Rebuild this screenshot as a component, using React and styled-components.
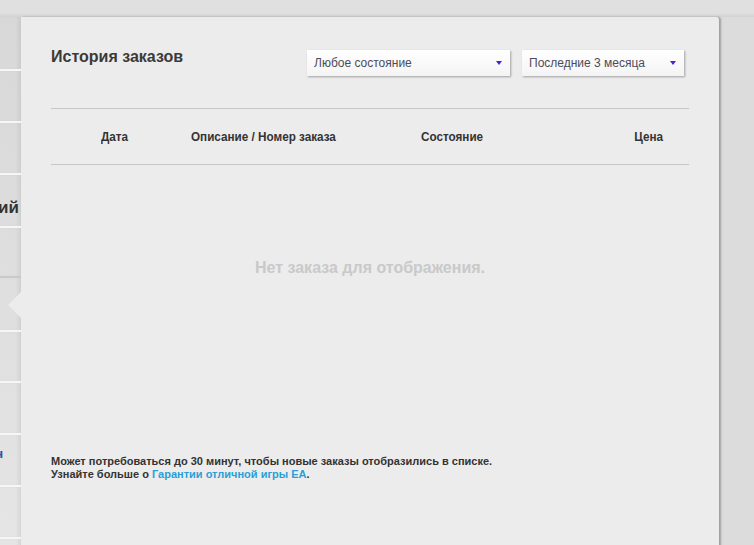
import React from "react";
import styled, { createGlobalStyle } from "styled-components";

const Global = createGlobalStyle`
  html, body { margin: 0; padding: 0; }
  body {
    background: #dcdcdc;
    font-family: "Liberation Sans", Arial, sans-serif;
  }
`;

const Page = styled.div`
  width: 754px;
  height: 545px;
  overflow: hidden;
  display: flex;
  flex-direction: column;
  background: #dcdcdc;
`;

const TopStrip = styled.div`
  height: 17px;
  flex: none;
  background: linear-gradient(#e0e0e0 0, #e0e0e0 13px, #d2d2d2 17px);
`;

const Body = styled.div`
  flex: 1;
  display: flex;
  align-items: stretch;
`;

const Sidebar = styled.nav`
  width: 21px;
  flex: none;
  display: flex;
  flex-direction: column;
  background: linear-gradient(#d8d8d8, #e6e6e6);
`;

const SideItem = styled.div`
  position: relative;
  height: ${(p) => p.$h}px;
  flex: none;
  border-bottom: 2px solid ${(p) => (p.$dark ? "#c9c9c9" : "#f6f6f6")};
  box-shadow: inset -4px 0 4px -2px rgba(0, 0, 0, 0.08);
  overflow: hidden;
  display: flex;
  justify-content: flex-end;
  align-items: ${(p) => p.$align || "center"};
`;

const SideLabel = styled.span`
  white-space: nowrap;
  font-weight: bold;
  font-size: ${(p) => p.$size}px;
  color: ${(p) => p.$color};
  margin-right: ${(p) => p.$offset}px;
  margin-top: ${(p) => p.$top || 0}px;
  margin-bottom: ${(p) => p.$bottom || 0}px;
`;

const ActiveArrow = styled.div`
  position: absolute;
  right: 0;
  top: 14px;
  width: 0;
  height: 0;
  border-top: 13px solid transparent;
  border-bottom: 13px solid transparent;
  border-right: 13px solid #ececec;
`;

const Panel = styled.main`
  width: 638px;
  flex: none;
  background: #ececec;
  border-top-right-radius: 3px;
  box-shadow: 2px 0 2px rgba(0, 0, 0, 0.28);
  padding: 31px 30px 0 30px;
  display: flex;
  flex-direction: column;
`;

const HeaderRow = styled.div`
  display: flex;
  justify-content: space-between;
  align-items: flex-start;
  height: 60px;
  border-bottom: 1px solid #c6c6c6;
`;

const Title = styled.h1`
  margin: 0;
  font-size: 16px;
  line-height: 18px;
  font-weight: bold;
  color: #3a3a3a;
`;

const Filters = styled.div`
  display: flex;
  gap: 12px;
  margin-top: 2px;
  margin-right: 5px;
`;

const Select = styled.div`
  width: ${(p) => p.$w}px;
  height: 26px;
  box-sizing: border-box;
  padding: 0 8px 0 7px;
  display: flex;
  align-items: center;
  justify-content: space-between;
  background: linear-gradient(#ffffff, #f4f4f4);
  box-shadow: 1px 1px 2px rgba(0, 0, 0, 0.32);
  font-size: 12px;
  color: #4d4b58;
`;

const Caret = styled.span`
  width: 0;
  height: 0;
  border-left: 3.5px solid transparent;
  border-right: 3.5px solid transparent;
  border-top: 4px solid #4f1fd0;
  margin-top: -1px;
`;

const TableHead = styled.div`
  display: grid;
  grid-template-columns: 90px 230px 1fr auto;
  align-items: center;
  height: 55px;
  padding: 0 26px 0 50px;
  border-bottom: 1px solid #c6c6c6;
`;

const HeadCell = styled.div`
  font-family: "Liberation Sans Narrow", "Liberation Sans", Arial, sans-serif;
  font-weight: bold;
  font-size: 13px;
  color: #333;
  white-space: nowrap;
  transform: scaleX(0.9);
  transform-origin: ${(p) => (p.$end ? "right" : "left")} center;
`;

const Empty = styled.div`
  height: 206px;
  display: flex;
  align-items: center;
  justify-content: center;
  font-size: 16px;
  font-weight: bold;
  color: #c9c9c9;
`;

const Note = styled.p`
  margin: 84px 0 0 0;
  font-size: 11px;
  line-height: 13px;
  font-weight: bold;
  color: #333;
`;

const Link = styled.a`
  color: #2a9fd8;
  text-decoration: none;
`;

const Rest = styled.div`
  flex: 1;
`;

export default function App() {
  return (
    <Page>
      <Global />
      <TopStrip />
      <Body>
        <Sidebar>
          <SideItem $h={52} />
          <SideItem $h={50} />
          <SideItem $h={50} />
          <SideItem $h={51} $align="flex-end">
            <SideLabel $size={17} $color="#333" $offset={2} $bottom={8}>
              уведомлений
            </SideLabel>
          </SideItem>
          <SideItem $h={48} $dark />
          <SideItem $h={52}>
            <ActiveArrow />
          </SideItem>
          <SideItem $h={49} />
          <SideItem $h={50} />
          <SideItem $h={50} $align="flex-start">
            <SideLabel $size={13} $color="#2d4fa0" $offset={18} $top={11}>
              Подписки н
            </SideLabel>
          </SideItem>
          <SideItem $h={50} />
          <SideItem $h={50} />
        </Sidebar>
        <Panel>
          <HeaderRow>
            <Title>История заказов</Title>
            <Filters>
              <Select $w={203}>
                Любое состояние
                <Caret />
              </Select>
              <Select $w={162}>
                Последние 3 месяца
                <Caret />
              </Select>
            </Filters>
          </HeaderRow>
          <TableHead>
            <HeadCell>Дата</HeadCell>
            <HeadCell>Описание / Номер заказа</HeadCell>
            <HeadCell>Состояние</HeadCell>
            <HeadCell $end>Цена</HeadCell>
          </TableHead>
          <Empty>Нет заказа для отображения.</Empty>
          <Note>
            Может потребоваться до 30 минут, чтобы новые заказы отобразились в списке.
            <br />
            Узнайте больше о <Link href="#">Гарантии отличной игры EA</Link>.
          </Note>
        </Panel>
        <Rest />
      </Body>
    </Page>
  );
}
